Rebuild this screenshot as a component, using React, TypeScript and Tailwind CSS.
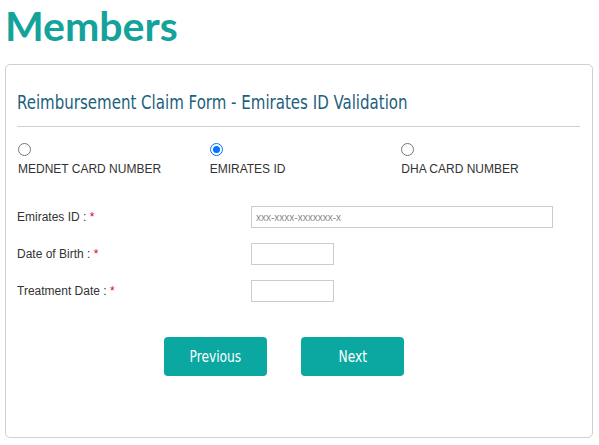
import React, { useState } from 'react';

const narrow = { fontFamily: '"DejaVu Sans Condensed", "Liberation Sans", sans-serif' };

const Radio: React.FC<{ label: string; checked: boolean; onChange: () => void }> = ({ label, checked, onChange }) => (
  <label className="flex flex-col items-start cursor-pointer">
    <span
      className={`w-[13px] h-[13px] rounded-full border flex items-center justify-center ${checked ? 'border-[#0075ff]' : 'border-[#767676]'}`}
      onClick={onChange}
    >
      {checked && <span className="w-[7px] h-[7px] rounded-full bg-[#0075ff]"></span>}
    </span>
    <span className="mt-[6px] text-[12px] text-[#333] leading-[15px]">{label}</span>
  </label>
);

const Field: React.FC<{ label: string; wide?: boolean; placeholder?: string }> = ({ label, wide, placeholder }) => (
  <div className="flex items-center h-[22px]">
    <div className="w-[234px] text-[12px] text-[#333]">
      {label} : <span className="text-[#e4002b]">*</span>
    </div>
    <input
      className={`h-[22px] border border-[#ccc] bg-white px-[4px] text-[10px] text-[#666] placeholder:text-[#888] outline-none ${wide ? 'w-[302px]' : 'w-[83px]'}`}
      placeholder={placeholder}
    />
  </div>
);

export default function App() {
  const [mode, setMode] = useState('emirates');

  return (
    <div className="w-[599px] h-[445px] bg-white overflow-hidden" style={{ fontFamily: '"Liberation Sans", Arial, sans-serif' }}>
      <h1 className="pl-[5px] pt-[2px] h-[64px] text-[41px] leading-[48px] font-bold text-[#14a39b]" style={{ fontFamily: 'Lato, "Open Sans", sans-serif' }}>
        Members
      </h1>

      <div className="ml-[5px] w-[588px] h-[374px] border border-[#cfcfcf] rounded-[5px] px-[11px]">
        <div className="pt-[25px] pb-[12px] border-b border-[#d0d0d0] mr-[1px]">
          <h2 className="text-[20px] leading-[24px] text-[#1d5f7e] origin-left scale-x-[0.835] whitespace-nowrap" style={narrow}>
            Reimbursement Claim Form - Emirates ID Validation
          </h2>
        </div>

        <div className="grid grid-cols-3 pt-[16px] pl-[1px] w-[576px]">
          <Radio label="MEDNET CARD NUMBER" checked={mode === 'mednet'} onChange={() => setMode('mednet')} />
          <Radio label="EMIRATES ID" checked={mode === 'emirates'} onChange={() => setMode('emirates')} />
          <Radio label="DHA CARD NUMBER" checked={mode === 'dha'} onChange={() => setMode('dha')} />
        </div>

        <div className="flex flex-col gap-[15px] pt-[29px]">
          <Field label="Emirates ID" wide placeholder="xxx-xxxx-xxxxxxx-x" />
          <Field label="Date of Birth" />
          <Field label="Treatment Date" />
        </div>

        <div className="flex gap-[34px] pl-[147px] pt-[35px]">
          <button className="w-[103px] h-[39px] rounded-[4px] bg-[#0aa8a1] text-white text-[16px]" style={narrow}>
            <span className="inline-block scale-x-[0.85]">Previous</span>
          </button>
          <button className="w-[103px] h-[39px] rounded-[4px] bg-[#0aa8a1] text-white text-[16px]" style={narrow}>
            <span className="inline-block scale-x-[0.85]">Next</span>
          </button>
        </div>
      </div>
    </div>
  );
}
